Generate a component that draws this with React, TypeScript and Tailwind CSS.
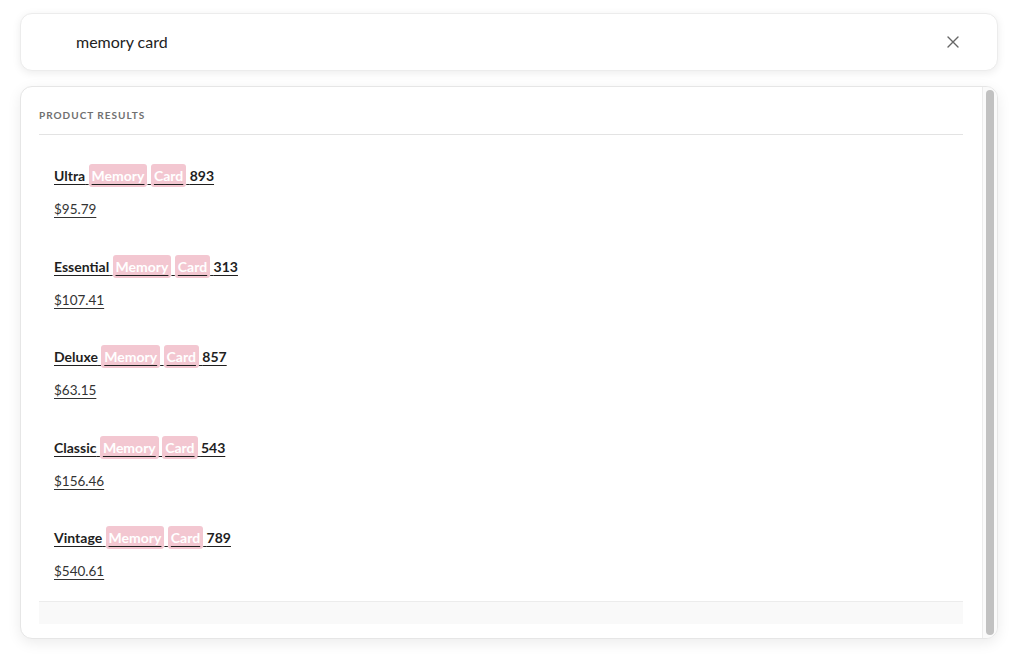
const items = [
  { prefix: "Ultra", num: "893", price: "$95.79" },
  { prefix: "Essential", num: "313", price: "$107.41" },
  { prefix: "Deluxe", num: "857", price: "$63.15" },
  { prefix: "Classic", num: "543", price: "$156.46" },
  { prefix: "Vintage", num: "789", price: "$540.61" },
];

function Hl({ children }: { children: string }) {
  return (
    <mark className="rounded-[3px] bg-[#f3c7d1] px-[3px] py-[3px] font-bold text-white">{children}</mark>
  );
}

export default function App() {
  return (
    <div
      className="h-[655px] w-[1024px] overflow-hidden bg-white"
      style={{ fontFamily: "Lato, 'Open Sans', sans-serif" }}
    >
      <div className="w-[998px] pl-[20px] pt-[13px]">
        <div className="flex h-[58px] items-center rounded-xl border border-[#ececec] bg-white pl-[55px] pr-[38px] shadow-[0_2px_8px_rgba(0,0,0,0.08)]">
          <span className="flex-1 text-[16px] text-[#222]">memory card</span>
          <svg width="12" height="12" viewBox="0 0 12 12" className="text-[#666]">
            <path d="M1 1L11 11M11 1L1 11" stroke="currentColor" strokeWidth="1.4" strokeLinecap="round" />
          </svg>
        </div>

        <div className="mt-[15px] flex h-[553px] overflow-hidden rounded-xl border border-[#e6e6e6] bg-white shadow-[0_4px_14px_rgba(0,0,0,0.08)]">
          <div className="flex flex-1 flex-col pl-[18px] pr-[19px]">
            <div className="border-b border-[#e3e3e3] pb-[12px] pt-[21px] text-[10px] font-bold leading-[14px] tracking-[0.1em] text-[#707070]">
              PRODUCT RESULTS
            </div>
            <ul className="flex flex-1 flex-col gap-[39.5px] pl-[15px] pt-[32px]">
              {items.map((it) => (
                <li key={it.prefix} className="flex flex-col items-start gap-[15px] leading-[18px]">
                  <a className="text-[14px] font-bold text-[#1f1f1f] underline underline-offset-[3px]">
                    {it.prefix} <Hl>Memory</Hl> <Hl>Card</Hl> {it.num}
                  </a>
                  <a className="text-[13.5px] text-[#333] underline underline-offset-[3px]">{it.price}</a>
                </li>
              ))}
            </ul>
            <div className="mb-[14px] h-[23px] border-t border-[#ececec] bg-[#f9f9f9]" />
          </div>
          <div className="flex w-[15px] justify-center border-l border-[#ececec] bg-[#fafafa] py-[3px]">
            <div className="w-[8px] rounded-full bg-[#c1c1c1]" />
          </div>
        </div>
      </div>
    </div>
  );
}
